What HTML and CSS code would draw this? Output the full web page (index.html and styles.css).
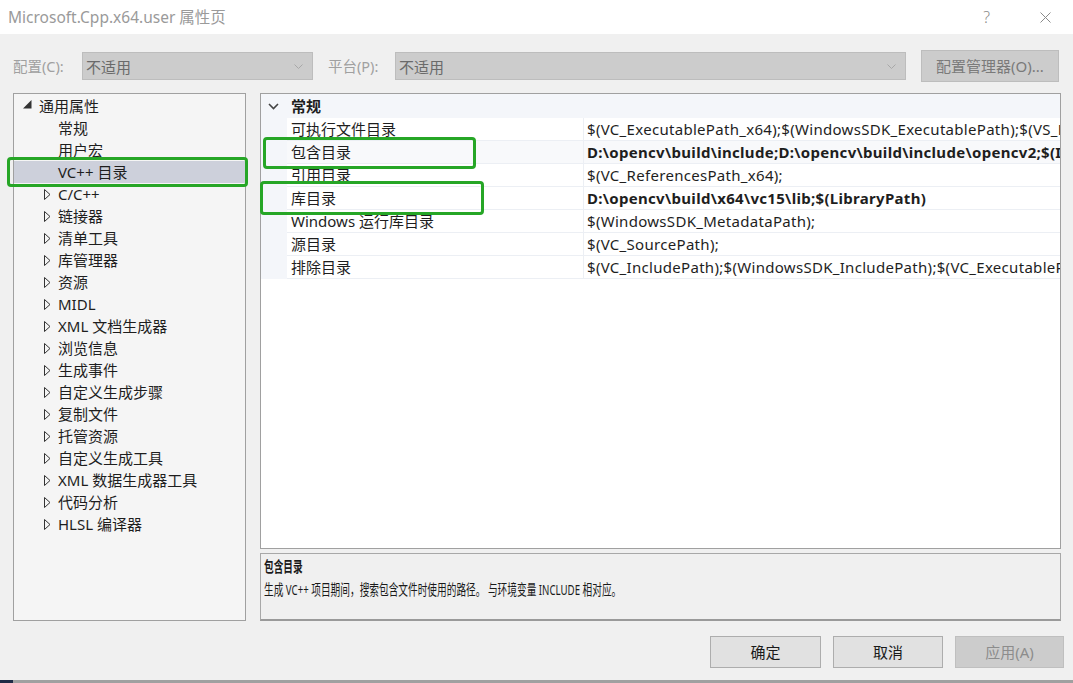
FILE: index.html
```html
<!DOCTYPE html>
<html lang="zh-CN">
<head>
<meta charset="utf-8">
<title>Microsoft.Cpp.x64.user 属性页</title>
<link rel="stylesheet" href="styles.css">
</head>
<body>
<div class="window">
  <div class="titlebar">
    <span class="title">Microsoft.Cpp.x64.user 属性页</span>
    <div class="title-actions">
      <span class="help">?</span>
      <svg class="close" width="11" height="11" viewBox="0 0 11 11"><path d="M0.5 0.5 L10.5 10.5 M10.5 0.5 L0.5 10.5" stroke="#8a8a8a" stroke-width="1" fill="none"/></svg>
    </div>
  </div>
  <div class="body">
    <div class="config-row">
      <span class="cfg-label lbl1">配置(C):</span>
      <div class="select sel1"><span>不适用</span><svg class="chev" width="9" height="5" viewBox="0 0 9 5"><path d="M0.5 0.5 L4.5 4.5 L8.5 0.5" stroke="#a8a8a8" fill="none"/></svg></div>
      <span class="cfg-label lbl2">平台(P):</span>
      <div class="select sel2"><span>不适用</span><svg class="chev" width="9" height="5" viewBox="0 0 9 5"><path d="M0.5 0.5 L4.5 4.5 L8.5 0.5" stroke="#a8a8a8" fill="none"/></svg></div>
      <button class="btn cfg-btn">配置管理器(O)...</button>
    </div>
    <div class="content">
      <div class="tree">
        <div class="trow lvl0"><svg class="exp" width="9" height="9" viewBox="0 0 9 9"><path d="M8.5 0 L8.5 8.5 L0 8.5 Z" fill="#333"/></svg><span>通用属性</span></div>
        <div class="trow leaf"><span>常规</span></div>
        <div class="trow leaf"><span>用户宏</span></div>
        <div class="trow leaf selected"><span>VC++ 目录</span></div>
        <div class="trow coll"><svg class="tri" width="7" height="11" viewBox="0 0 7 11"><path d="M0.5 0.5 L6 5.5 L0.5 10.5 Z" stroke="#333" fill="none"/></svg><span>C/C++</span></div>
        <div class="trow coll"><svg class="tri" width="7" height="11" viewBox="0 0 7 11"><path d="M0.5 0.5 L6 5.5 L0.5 10.5 Z" stroke="#333" fill="none"/></svg><span>链接器</span></div>
        <div class="trow coll"><svg class="tri" width="7" height="11" viewBox="0 0 7 11"><path d="M0.5 0.5 L6 5.5 L0.5 10.5 Z" stroke="#333" fill="none"/></svg><span>清单工具</span></div>
        <div class="trow coll"><svg class="tri" width="7" height="11" viewBox="0 0 7 11"><path d="M0.5 0.5 L6 5.5 L0.5 10.5 Z" stroke="#333" fill="none"/></svg><span>库管理器</span></div>
        <div class="trow coll"><svg class="tri" width="7" height="11" viewBox="0 0 7 11"><path d="M0.5 0.5 L6 5.5 L0.5 10.5 Z" stroke="#333" fill="none"/></svg><span>资源</span></div>
        <div class="trow coll"><svg class="tri" width="7" height="11" viewBox="0 0 7 11"><path d="M0.5 0.5 L6 5.5 L0.5 10.5 Z" stroke="#333" fill="none"/></svg><span>MIDL</span></div>
        <div class="trow coll"><svg class="tri" width="7" height="11" viewBox="0 0 7 11"><path d="M0.5 0.5 L6 5.5 L0.5 10.5 Z" stroke="#333" fill="none"/></svg><span>XML 文档生成器</span></div>
        <div class="trow coll"><svg class="tri" width="7" height="11" viewBox="0 0 7 11"><path d="M0.5 0.5 L6 5.5 L0.5 10.5 Z" stroke="#333" fill="none"/></svg><span>浏览信息</span></div>
        <div class="trow coll"><svg class="tri" width="7" height="11" viewBox="0 0 7 11"><path d="M0.5 0.5 L6 5.5 L0.5 10.5 Z" stroke="#333" fill="none"/></svg><span>生成事件</span></div>
        <div class="trow coll"><svg class="tri" width="7" height="11" viewBox="0 0 7 11"><path d="M0.5 0.5 L6 5.5 L0.5 10.5 Z" stroke="#333" fill="none"/></svg><span>自定义生成步骤</span></div>
        <div class="trow coll"><svg class="tri" width="7" height="11" viewBox="0 0 7 11"><path d="M0.5 0.5 L6 5.5 L0.5 10.5 Z" stroke="#333" fill="none"/></svg><span>复制文件</span></div>
        <div class="trow coll"><svg class="tri" width="7" height="11" viewBox="0 0 7 11"><path d="M0.5 0.5 L6 5.5 L0.5 10.5 Z" stroke="#333" fill="none"/></svg><span>托管资源</span></div>
        <div class="trow coll"><svg class="tri" width="7" height="11" viewBox="0 0 7 11"><path d="M0.5 0.5 L6 5.5 L0.5 10.5 Z" stroke="#333" fill="none"/></svg><span>自定义生成工具</span></div>
        <div class="trow coll"><svg class="tri" width="7" height="11" viewBox="0 0 7 11"><path d="M0.5 0.5 L6 5.5 L0.5 10.5 Z" stroke="#333" fill="none"/></svg><span>XML 数据生成器工具</span></div>
        <div class="trow coll"><svg class="tri" width="7" height="11" viewBox="0 0 7 11"><path d="M0.5 0.5 L6 5.5 L0.5 10.5 Z" stroke="#333" fill="none"/></svg><span>代码分析</span></div>
        <div class="trow coll"><svg class="tri" width="7" height="11" viewBox="0 0 7 11"><path d="M0.5 0.5 L6 5.5 L0.5 10.5 Z" stroke="#333" fill="none"/></svg><span>HLSL 编译器</span></div>
      </div>
      <div class="right">
        <div class="grid">
          <div class="grow header"><span class="gutter"><svg width="11" height="7" viewBox="0 0 11 7"><path d="M1 1 L5.5 5.5 L10 1" stroke="#444" stroke-width="1.6" fill="none"/></svg></span><span class="cat">常规</span></div>
          <div class="grow"><span class="gutter"></span><span class="name">可执行文件目录</span><span class="val">$(VC_ExecutablePath_x64);$(WindowsSDK_ExecutablePath);$(VS_ExecutablePath);$(MSBuild_ExecutablePath)</span></div>
          <div class="grow current"><span class="gutter"></span><span class="name">包含目录</span><span class="val bold">D:\opencv\build\include;D:\opencv\build\include\opencv2;$(IncludePath)</span></div>
          <div class="grow"><span class="gutter"></span><span class="name">引用目录</span><span class="val">$(VC_ReferencesPath_x64);</span></div>
          <div class="grow"><span class="gutter"></span><span class="name">库目录</span><span class="val bold">D:\opencv\build\x64\vc15\lib;$(LibraryPath)</span></div>
          <div class="grow"><span class="gutter"></span><span class="name">Windows 运行库目录</span><span class="val">$(WindowsSDK_MetadataPath);</span></div>
          <div class="grow"><span class="gutter"></span><span class="name">源目录</span><span class="val">$(VC_SourcePath);</span></div>
          <div class="grow"><span class="gutter"></span><span class="name">排除目录</span><span class="val">$(VC_IncludePath);$(WindowsSDK_IncludePath);$(VC_ExecutablePath_x64)</span></div>
        </div>
        <div class="desc">
          <div class="desc-title">包含目录</div>
          <div class="desc-text">生成 VC++ 项目期间，搜索包含文件时使用的路径。 与环境变量 INCLUDE 相对应。</div>
        </div>
      </div>
    </div>
    <div class="buttons">
      <button class="btn b-ok">确定</button>
      <button class="btn b-cancel">取消</button>
      <button class="btn b-apply" disabled>应用(A)</button>
    </div>
  </div>
  <div class="strip"><span class="strip-dark"></span></div>

  <div class="mark mark-tree"></div>
  <div class="mark mark-inc"></div>
  <div class="mark mark-lib"></div>
</div>
</body>
</html>
```

FILE: styles.css
```css
* { box-sizing: border-box; }

body {
  margin: 0;
  font-family: "Noto Sans", "Noto Sans CJK SC", sans-serif;
  background: #f0f0f0;
}

.window {
  position: relative;
  width: 1073px;
  height: 683px;
  display: flex;
  flex-direction: column;
  background: #f0f0f0;
  overflow: hidden;
}

/* title bar */
.titlebar {
  height: 34px;
  flex: none;
  background: #ffffff;
  display: flex;
  align-items: center;
  justify-content: space-between;
  padding-left: 8px;
}
.title {
  font-size: 15.5px;
  color: #9a9a9a;
  line-height: 1;
  margin-top: 1px;
}
.title-actions {
  display: flex;
  align-items: center;
  gap: 50px;
  padding-right: 22px;
}
.help {
  font-size: 16px;
  color: #8a8a8a;
  line-height: 1;
  font-family: "Noto Sans", sans-serif;
  font-weight: 300;
}
.close { display: block; margin-top: 1px; }

/* body */
.body {
  height: 646px;
  flex: none;
  display: flex;
  flex-direction: column;
  padding: 16px 9px 0 13px;
}

.config-row {
  height: 32px;
  display: flex;
  align-items: center;
}
.cfg-label {
  font-size: 14.5px;
  color: #a0a0a0;
  line-height: 1;
}
.lbl1 { width: 69px; }
.lbl2 { width: 67px; }
.select {
  height: 28px;
  background: #cccccc;
  border: 1px solid #bdbdbd;
  display: flex;
  align-items: center;
  justify-content: space-between;
  padding: 0 9px 0 3px;
  font-size: 15px;
  color: #6a6a6a;
}
.sel1 { width: 231px; margin-right: 15px; }
.sel2 { width: 511px; margin-right: 15px; }
.chev { display: block; }

.btn {
  font-family: "Noto Sans", "Noto Sans CJK SC", sans-serif;
  font-size: 15px;
  height: 32px;
  border: 1px solid #adadad;
  background: #e1e1e1;
  color: #1a1a1a;
  padding: 0;
  line-height: 1;
}
.cfg-btn {
  width: 138px;
  background: #cccccc;
  border-color: #bdbdbd;
  color: #7a7a7a;
}

/* content */
.content {
  margin-top: 11px;
  height: 528px;
  display: flex;
  gap: 14px;
}

.tree {
  width: 233px;
  height: 528px;
  border: 1px solid #a0a0a0;
  background: #f5f5f5;
  padding-top: 1px;
}
.trow {
  height: 22px;
  display: flex;
  align-items: center;
  font-size: 15px;
  color: #1e1e1e;
  line-height: 1;
  white-space: nowrap;
}
.trow svg { display: block; flex: none; }
.lvl0 { padding-left: 9px; }
.lvl0 .exp { margin-right: 7px; margin-top: -3px; }
.leaf { padding-left: 44px; }
.coll { padding-left: 30px; }
.coll .tri { margin-right: 7px; }
.selected { background: #cdd0db; }

.right {
  width: 801px;
  display: flex;
  flex-direction: column;
  gap: 4px;
}

.grid {
  height: 456px;
  border: 1px solid #a0a0a0;
  background: #ffffff;
  overflow: hidden;
}
.grow {
  display: grid;
  grid-template-columns: 26px 297px 1fr;
  height: 23px;
  font-size: 15px;
  color: #1e1e1e;
  line-height: 1;
}
.grow.header {
  height: 24px;
  background: #f4f6fa;
}
.gutter {
  background: #f4f6fa;
  display: flex;
  align-items: center;
  justify-content: center;
}
.gutter svg { display: block; margin-left: -1px; }
.cat {
  grid-column: 2 / 4;
  display: flex;
  align-items: center;
  padding-left: 4px;
  font-weight: bold;
}
.name, .val {
  display: flex;
  align-items: center;
  border-bottom: 1px solid #eceff4;
  white-space: nowrap;
  overflow: hidden;
}
.name {
  padding-left: 4px;
  border-right: 1px solid #eceff4;
}
.val { padding-left: 3px; letter-spacing: 0.3px; }
.bold { font-weight: bold; }
.current .name, .current .val { background: #f8f9fb; }

.desc {
  height: 68px;
  border: 1px solid #a8a8a8;
  border-bottom: 2px solid #9a9a9a;
  background: #f0f0f0;
  padding: 1px 0 0 3px;
  color: #1a1a1a;
  overflow: hidden;
}
.desc-title, .desc-text {
  font-size: 15px;
  line-height: 23px;
  white-space: nowrap;
  transform: scaleX(0.645);
  transform-origin: left center;
}
.desc-title { font-weight: bold; }

/* buttons */
.buttons {
  margin-top: 15px;
  display: flex;
  justify-content: flex-end;
  gap: 12px;
}
.b-ok { width: 111px; }
.b-cancel { width: 110px; }
.b-apply {
  width: 109px;
  background: #cccccc;
  border-color: #bfbfbf;
  color: #8c8c8c;
}

.strip {
  height: 3px;
  flex: none;
  background: #a0a0a0;
  display: flex;
}
.strip-dark {
  width: 13px;
  background: #1f2b46;
}

/* green annotation boxes */
.mark {
  position: absolute;
  border: 3px solid #26a626;
  border-radius: 4px;
}
.mark-tree { left: 7px; top: 157px; width: 241px; height: 30px; }
.mark-inc { left: 263px; top: 137px; width: 213px; height: 32px; }
.mark-lib { left: 260px; top: 181px; width: 224px; height: 34px; }
```
